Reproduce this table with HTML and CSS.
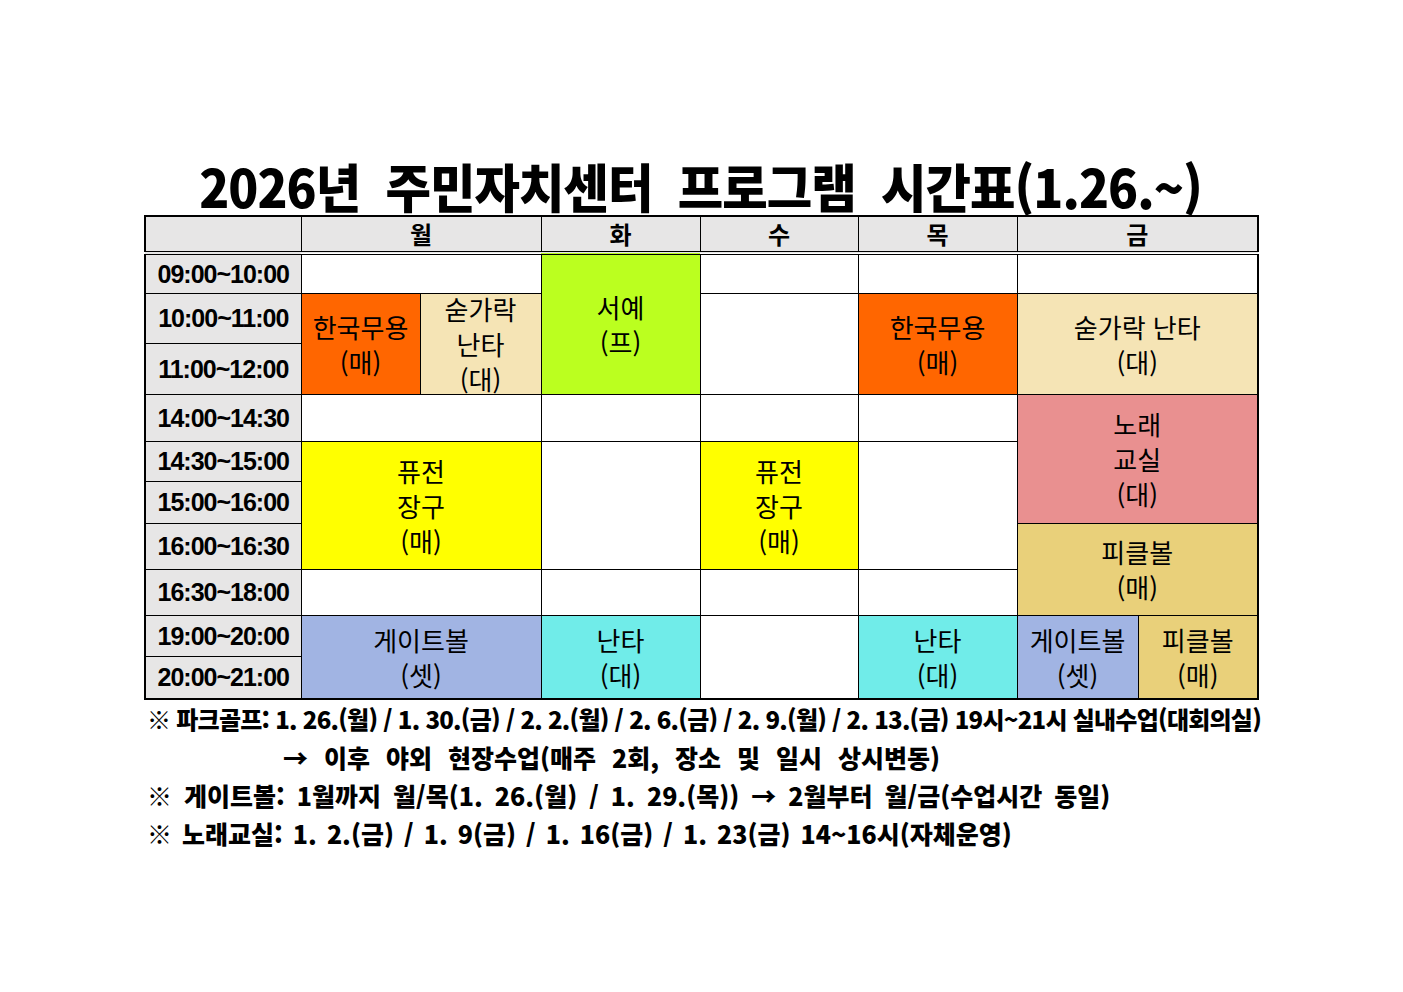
FILE: index.html
```html
<!DOCTYPE html>
<html lang="ko">
<head>
<meta charset="utf-8">
<title>2026년 주민자치센터 프로그램 시간표</title>
<link rel="stylesheet" href="styles.css">
</head>
<body>
<div class="page">
  <h1 class="title">2026년 주민자치센터 프로그램 시간표(1.26.~)</h1>
  <table class="sched">
    <colgroup>
      <col class="c-time"><col class="c-mon1"><col class="c-mon2"><col class="c-tue"><col class="c-wed"><col class="c-thu"><col class="c-fri1"><col class="c-fri2">
    </colgroup>
    <thead>
      <tr class="hd">
        <th class="day"></th>
        <th class="day" colspan="2">월</th>
        <th class="day">화</th>
        <th class="day">수</th>
        <th class="day">목</th>
        <th class="day" colspan="2">금</th>
      </tr>
    </thead>
    <tbody>
      <tr class="r1">
        <th class="time">09:00~10:00</th>
        <td colspan="2"></td>
        <td rowspan="3" class="lime">서예<br>(프)</td>
        <td></td>
        <td></td>
        <td colspan="2"></td>
      </tr>
      <tr class="r2">
        <th class="time">10:00~11:00</th>
        <td rowspan="2" class="orange">한국무용<br>(매)</td>
        <td rowspan="2" class="tan"><div class="fit">숟가락<br>난타<br>(대)</div></td>
        <td rowspan="2"></td>
        <td rowspan="2" class="orange">한국무용<br>(매)</td>
        <td rowspan="2" colspan="2" class="tan">숟가락 난타<br>(대)</td>
      </tr>
      <tr class="r3">
        <th class="time">11:00~12:00</th>
      </tr>
      <tr class="r4">
        <th class="time">14:00~14:30</th>
        <td colspan="2"></td>
        <td></td>
        <td></td>
        <td></td>
        <td colspan="2" rowspan="3" class="pink">노래<br>교실<br>(대)</td>
      </tr>
      <tr class="r5">
        <th class="time">14:30~15:00</th>
        <td colspan="2" rowspan="3" class="yellow">퓨전<br>장구<br>(매)</td>
        <td rowspan="3"></td>
        <td rowspan="3" class="yellow">퓨전<br>장구<br>(매)</td>
        <td rowspan="3"></td>
      </tr>
      <tr class="r6">
        <th class="time">15:00~16:00</th>
      </tr>
      <tr class="r7">
        <th class="time">16:00~16:30</th>
        <td colspan="2" rowspan="2" class="gold">피클볼<br>(매)</td>
      </tr>
      <tr class="r8">
        <th class="time">16:30~18:00</th>
        <td colspan="2"></td>
        <td></td>
        <td></td>
        <td></td>
      </tr>
      <tr class="r9">
        <th class="time">19:00~20:00</th>
        <td colspan="2" rowspan="2" class="blue">게이트볼<br>(셋)</td>
        <td rowspan="2" class="cyan">난타<br>(대)</td>
        <td rowspan="2"></td>
        <td rowspan="2" class="cyan">난타<br>(대)</td>
        <td rowspan="2" class="blue">게이트볼<br>(셋)</td>
        <td rowspan="2" class="gold">피클볼<br>(매)</td>
      </tr>
      <tr class="r10">
        <th class="time">20:00~21:00</th>
      </tr>
    </tbody>
  </table>
  <div class="notes">
    <p class="note n1"><span class="mark">※</span> 파크골프: 1. 26.(월) / 1. 30.(금) / 2. 2.(월) / 2. 6.(금) / 2. 9.(월) / 2. 13.(금) 19시~21시 실내수업(대회의실)</p>
    <p class="note n2">→ 이후 야외 현장수업(매주 2회, 장소 및 일시 상시변동)</p>
    <p class="note n3"><span class="mark">※</span> 게이트볼: 1월까지 월/목(1. 26.(월) / 1. 29.(목)) → 2월부터 월/금(수업시간 동일)</p>
    <p class="note n4"><span class="mark">※</span> 노래교실: 1. 2.(금) / 1. 9(금) / 1. 16(금) / 1. 23(금) 14~16시(자체운영)</p>
  </div>
</div>
</body>
</html>
```
FILE: styles.css
```css
html, body {
  margin: 0;
  padding: 0;
  background: #ffffff;
}

body {
  font-family: "Noto Sans CJK KR", "Noto Sans", sans-serif;
  color: #000000;
}

.page {
  width: 1113px;
  margin: 0 0 0 144px;
  padding-top: 158px;
}

.title {
  margin: 0;
  height: 57px;
  line-height: 56px;
  font-size: 52px;
  font-weight: 900;
  text-align: center;
  letter-spacing: -1px;
  word-spacing: 13px;
  white-space: nowrap;
  transform: scaleX(0.95);
}

.sched {
  width: 1113px;
  table-layout: fixed;
  border-collapse: collapse;
  border: 2px solid #000;
}

.c-time { width: 156px; }
.c-mon1 { width: 119px; }
.c-mon2 { width: 121px; }
.c-tue { width: 159px; }
.c-wed { width: 158px; }
.c-thu { width: 159px; }
.c-fri1 { width: 121px; }
.c-fri2 { width: 120px; }

.sched th,
.sched td {
  border: 1px solid #000;
  padding: 0;
  text-align: center;
  vertical-align: middle;
}

.sched td {
  font-size: 26px;
  font-weight: 400;
  line-height: 35px;
  white-space: nowrap;
}

.fit {
  height: 96px;
  display: flex;
  flex-direction: column;
  justify-content: center;
}

.sched .day {
  background: #e7e6e6;
  font-size: 24px;
  font-weight: 700;
  line-height: 30px;
  border-bottom: 4px double #000;
}

.sched .time {
  background: #e7e6e6;
  font-family: "Liberation Sans", Arial, sans-serif;
  font-size: 25px;
  font-weight: 700;
  letter-spacing: -1px;
  white-space: nowrap;
  line-height: 30px;
}

.hd { height: 37px; }
.r1 { height: 40px; }
.r2 { height: 50px; }
.r3 { height: 51px; }
.r4 { height: 47px; }
.r5 { height: 40px; }
.r6 { height: 42px; }
.r7 { height: 46px; }
.r8 { height: 46px; }
.r9 { height: 41px; }
.r10 { height: 43px; }

.orange { background: #ff6600; }
.tan { background: #f5e4b5; }
.lime { background: #bbff1f; }
.yellow { background: #ffff00; }
.pink { background: #e99090; }
.gold { background: #e9d07a; }
.blue { background: #a1b4e3; }
.cyan { background: #70ece9; }

.notes {
  padding-left: 3px;
}

.note {
  margin: 0;
  font-size: 25px;
  font-weight: 900;
  line-height: 38px;
  white-space: nowrap;
  letter-spacing: 0;
  word-spacing: 4px;
}

.note .mark {
  font-weight: 700;
}

.note.n1 {
  font-size: 24px;
  letter-spacing: -0.75px;
  word-spacing: 0;
}

.note.n2 {
  padding-left: 136px;
  word-spacing: 9px;
}

.note.n3 {
  word-spacing: 5px;
}

.note.n4 {
  word-spacing: 3px;
}
```
